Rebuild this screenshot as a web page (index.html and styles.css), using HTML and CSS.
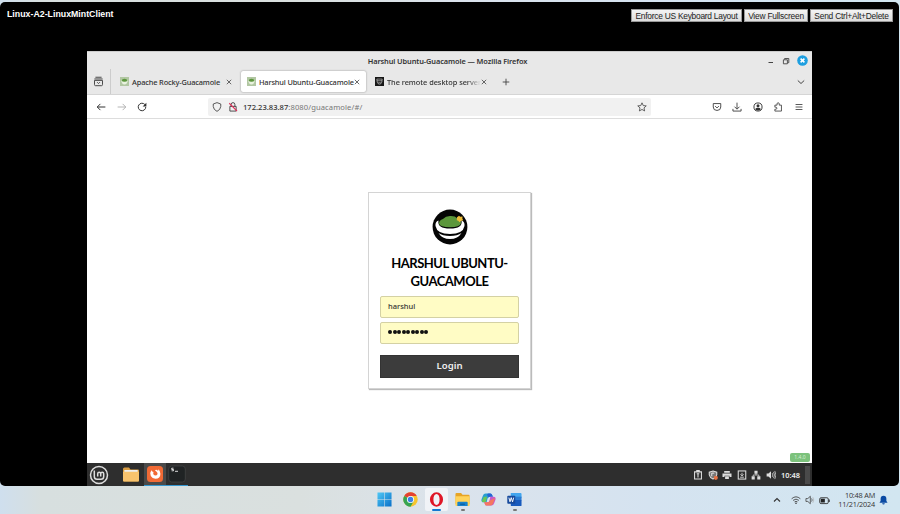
FILE: index.html
```html
<!DOCTYPE html>
<html lang="en">
<head>
<meta charset="utf-8">
<title>Linux-A2-LinuxMintClient</title>
<link rel="stylesheet" href="styles.css">
</head>
<body>
<main class="console">
  <header class="console-head">
    <strong class="vm-name">Linux-A2-LinuxMintClient</strong>
    <div class="console-actions">
      <button class="b1">Enforce US Keyboard Layout</button><button class="b2">View Fullscreen</button><button class="b3">Send Ctrl+Alt+Delete</button>
    </div>
  </header>
  <section class="desktop">
    <div class="titlebar">
      <span class="window-title">Harshul Ubuntu-Guacamole — Mozilla Firefox</span>
      <div class="window-buttons">
        <svg class="i8" viewBox="0 0 8 8"><path d="M1.5 5.5h4.500" stroke="#444" fill="none"/></svg>
        <svg class="i8" viewBox="0 0 8 8"><path d="M1.400 2.800h4v4h-4zM2.600 2.500v-1h4.200v4.200H5.800" stroke="#444" fill="none" stroke-width=".9"/></svg>
        <svg class="i11" viewBox="0 0 11 11"><circle cx="5.500" cy="5.500" r="5.300" fill="#1e9fe0"/><path d="m3.600 3.600 3.800 3.800m0-3.800L3.600 7.400" stroke="#fff" stroke-width="1.500"/></svg>
      </div>
    </div>
    <div class="tabs">
      <div class="tab-view"><svg class="i11" viewBox="0 0 16 16"><path d="M3.500 1.800h9M2 4.300h12M2.200 6.400h11.600v6.200q0 1.500-1.500 1.500H3.700q-1.500 0-1.500-1.500z" fill="none" stroke="#444" stroke-width="1.400"/><path d="m6 9 2 2 2-2" fill="none" stroke="#444" stroke-width="1.400"/></svg></div>
      <div class="tab">
        <svg class="fav" viewBox="0 0 10 10"><path fill="#b2c7a3" d="M0 0h10v10H0z"/><path d="M1.400 4.200h7.200Q8 8.200 5 8.200T1.400 4.200" fill="#e9f2df"/><ellipse cx="5" cy="3.600" rx="3" ry="1.700" fill="#5c963d"/></svg>
        <span class="tab-label">Apache Rocky-Guacamole</span>
        <svg class="close" viewBox="0 0 6 6"><path d="m.8.8 4.400 4.400m0-4.400L.8 5.200" stroke="#444" stroke-width=".8"/></svg>
      </div>
      <div class="tab active">
        <svg class="fav" viewBox="0 0 10 10"><path fill="#b2c7a3" d="M0 0h10v10H0z"/><path d="M1.400 4.200h7.200Q8 8.200 5 8.200T1.400 4.200" fill="#e9f2df"/><ellipse cx="5" cy="3.600" rx="3" ry="1.700" fill="#5c963d"/></svg>
        <span class="tab-label tight">Harshul Ubuntu-Guacamole</span>
        <svg class="close" viewBox="0 0 6 6"><path d="m.8.8 4.400 4.400m0-4.400L.8 5.200" stroke="#444" stroke-width=".8"/></svg>
      </div>
      <div class="tab third">
        <svg class="fav" viewBox="0 0 10 10"><path fill="#171717" d="M0 0h10v10H0z"/><path d="M2 2.300h6l-.4 3.200Q7 8 5 8T2.400 5.500zM2.200 4.200h5.600M3.500 6.400h3" fill="none" stroke="#ccc" stroke-width=".7"/></svg>
        <span class="tab-label fade">The remote desktop server</span>
        <svg class="close" viewBox="0 0 6 6"><path d="m.8.8 4.400 4.400m0-4.400L.8 5.200" stroke="#444" stroke-width=".8"/></svg>
      </div>
      <svg class="new-tab" viewBox="0 0 8 8"><path d="M4 .7v6.600M.7 4h6.600" stroke="#444" stroke-width=".9"/></svg>
      <svg class="tab-list" viewBox="0 0 8 8"><path d="m.8 2.500 3.200 3 3.200-3" fill="none" stroke="#444"/></svg>
    </div>
    <div class="navbar">
      <div class="history">
        <svg class="i10" viewBox="0 0 16 16"><path d="M15 8H2m5-5L2 8l5 5" fill="none" stroke="#333" stroke-width="1.600"/></svg>
        <svg class="i10" viewBox="0 0 16 16"><path d="M1 8h13M9 3l5 5-5 5" fill="none" stroke="#aaa" stroke-width="1.400"/></svg>
        <svg class="i10" viewBox="0 0 16 16"><path d="M12.500 4A6 6 0 1 0 14 8" fill="none" stroke="#333" stroke-width="1.600"/><path d="M15 1v6H9z" fill="#333"/></svg>
      </div>
      <div class="address">
        <svg class="i10" viewBox="0 0 16 16"><path d="m8 1 6 2.200v4Q13.500 12.500 8 15 2.500 12.500 2 7.200v-4z" fill="none" stroke="#444" stroke-width="1.400"/></svg>
        <svg class="i10 lock" viewBox="0 0 16 16"><path d="M3 7h10v7.500H3zM5 7V4q0-3 3-3t3 3v3" fill="none" stroke="#444" stroke-width="1.500"/><path d="m2 2 12.500 12.500" stroke="#e0305a" stroke-width="1.800"/></svg>
        <span class="url"><b>172.23.83.87</b>:8080/guacamole/#/</span>
        <svg class="i10 star" viewBox="0 0 16 16"><path d="m8 1.300 2 4.400 4.800.5-3.600 3.200 1 4.900L8 11.900l-4.200 2.400 1-4.900L1.200 6.200 6 5.700z" fill="none" stroke="#444" stroke-width="1.300"/></svg>
      </div>
      <div class="tools">
        <svg class="i10" viewBox="0 0 16 16"><path d="M2 2.500h12V8q0 5.500-6 5.500T2 8zM5 6.500l3 3 3-3" fill="none" stroke="#444" stroke-width="1.500"/></svg>
        <svg class="i10" viewBox="0 0 16 16"><path d="M8 1v10M4 7.500l4 4 4-4M1.500 11v3.500h13V11" fill="none" stroke="#444" stroke-width="1.500"/></svg>
        <svg class="i10" viewBox="0 0 16 16"><circle cx="8" cy="8" r="6.500" fill="none" stroke="#333" stroke-width="1.500"/><circle cx="8" cy="6" r="2.400" fill="#333"/><path d="M3.500 11.500Q4 9 6.500 9h3q2.500 0 3 2.500Q11 13.500 8 13.500t-4.500-2" fill="#333"/></svg>
        <svg class="i10" viewBox="0 0 16 16"><path d="M3 5h3.500V3q0-1.800 1.700-1.800T10 3v2h3.500v9.500H3v-3h1.500q1.700 0 1.700-1.600T4.500 8.300H3z" fill="none" stroke="#444" stroke-width="1.400"/></svg>
        <svg class="i10" viewBox="0 0 16 16"><path d="M2.500 4h11M2.500 8h11M2.500 12h11" stroke="#444" stroke-width="1.400"/></svg>
      </div>
    </div>
    <div class="page">
      <form class="login">
        <svg class="logo" viewBox="0 0 36 36"><circle cx="18" cy="18" r="17.400" fill="#050505"/><path d="M6.500 11.500Q3 12.500 3.500 17 5 25 18 25t14.500-8q.5-4.500-3-5.500 1.500 8-11.500 8T6.500 11.500" fill="#fff"/><path d="M6.500 24q4 3 11.500 3t11.500-3q-3.500 6-11.500 6T6.500 24" fill="#fff"/><path d="M7 14.500q0-3.300 4-4.500 2.500-2.700 7-2.900 5-.3 7.500 2.400 3.500 1.500 3.500 4.500-1 4.300-11 4.300T7 14.500" fill="#5c973b"/><path d="m25 8.300 2-1.500 1.300 1 2.200-.2-.1 2.200.8 1.500-2.200.7-1.500 1.200-1.200-1.400-1.500-.6z" fill="#edbd3a"/></svg>
        <h1>HARSHUL UBUNTU-<br>GUACAMOLE</h1>
        <div class="field">harshul</div>
        <div class="field password"><i></i><i></i><i></i><i></i><i></i><i></i><i></i><i></i><i></i></div>
        <button type="button" class="submit">Login</button>
      </form>
      <span class="version">1.4.0</span>
    </div>
    <div class="panel">
      <div class="menu"><svg viewBox="0 0 20 20"><circle cx="10" cy="10" r="8.500" fill="none" stroke="#ddd" stroke-width="1.500"/><path d="M5.300 5.500v6q0 2.800 2.700 2.800h4q2.700 0 2.700-2.800V8.800q0-1.500-1.500-1.500t-1.500 1.500v2.700-2.700q0-1.500-1.500-1.500T8.700 8.800v2.700" fill="none" stroke="#ddd" stroke-width="1.500"/></svg></div>
      <div class="app"><svg viewBox="0 0 18 18"><path d="M1 3q0-1.500 1.500-1.500H7l1.500 2h7.500q1 0 1 1V14q0 1.500-1 1.500H2Q1 15.500 1 14z" fill="#d99d43"/><path d="M2.300 4h13.400v3H2.300z" fill="#eee"/><path d="M1 5.700h16V14q0 1.500-1 1.500H2Q1 15.500 1 14z" fill="#f8c36d"/></svg></div>
      <div class="app open current"><svg viewBox="0 0 18 18"><rect x="1" y="1" width="16" height="16" rx="3.500" fill="#f26a35"/><path d="M5.500 5q-2.200 3-.7 6 1.500 2.700 4.600 2.700 5 0 5-5 0-2.700-2-4.500l-.3 1.800Q10 3.800 9 5.500q2 1 2.500 2.500.2 2.500-2.100 2.500-2 0-2.200-2.100l.3-1.300-1.600-.8z" fill="#fff"/></svg></div>
      <div class="app open"><svg viewBox="0 0 18 18"><rect x=".7" y="1" width="16.600" height="16" rx="3" fill="#202324" stroke="#464849" stroke-width=".7"/><path d="M5.500 3.200H3.700v1.300h1.800v1.300H3.600M7 6.300h3" fill="none" stroke="#eee" stroke-width=".9"/></svg></div>
      <div class="tray">
        <svg viewBox="0 0 16 16"><path d="M2.500 3h11v11.500h-11zM6 1h4v2H6zM6 6h4M8 6v6" fill="none" stroke="#ddd" stroke-width="1.700"/></svg>
        <svg viewBox="0 0 16 16"><path d="m8 1.500 6 2V8q-1 4.500-6 6.500Q3 12.500 2 8V3.500z" fill="#777" stroke="#ddd" stroke-width="1.700"/><path d="M6 5h4M6 5v5" stroke="#eee" stroke-width="1.500"/><circle cx="12.500" cy="12.500" r="3.300" fill="#e57245"/></svg>
        <svg viewBox="0 0 16 16"><path d="M3.500 1.500h9v3h-9zM.8 5.500h14.400V11H12V9H4v2H.8zM5 10h6v4.500H5z" fill="#ddd"/></svg>
        <svg viewBox="0 0 16 16"><rect x="2" y="1.500" width="12" height="13" fill="none" stroke="#ddd" stroke-width="1.700"/><path d="M8 4.500v4M5.500 7 8 9.500 10.500 7M5 11.500h6" fill="none" stroke="#ddd" stroke-width="1.400"/></svg>
        <svg viewBox="0 0 16 16"><path d="M5.500 1h5v5h-5zM1 10h5v5H1zM10 10h5v5h-5z" fill="#ddd"/><path d="M8 5v3M3.500 10V8h9v2" fill="none" stroke="#ddd" stroke-width="1.300"/></svg>
        <svg viewBox="0 0 16 16"><path d="M1 5.500h3L8 2v12l-4-3.500H1z" fill="#ddd"/><path d="M10 5q2 3 0 6m2-8q3.200 5 0 10m2-11.500q4 6.500 0 13" fill="none" stroke="#ccc" stroke-width="1.300"/></svg>
      </div>
      <span class="clock">10:48</span>
      <div class="show-desktop"></div>
    </div>
  </section>
</main>
<footer class="taskbar">
  <nav class="dock">
    <div class="pin"><svg viewBox="0 0 16 16"><defs><linearGradient id="win" x2="1" y2="1"><stop stop-color="#50c8f5"/><stop offset="1" stop-color="#0870c9"/></linearGradient></defs><path fill="url(#win)" d="M.5.5h7.200v7.200H.5zM8.300.5h7.200v7.200H8.300zM.5 8.300h7.200v7.200H.5zM8.300 8.300h7.200v7.200H8.300z"/></svg></div>
    <div class="pin"><svg viewBox="0 0 16 16"><circle cx="8" cy="8" r="7.700" fill="#f6c52e"/><path d="M8 8 1.330 4.150A7.700 7.700 0 0 1 14.670 4.150H8z" fill="#e44132"/><path d="M8 8 1.330 4.150A7.700 7.700 0 0 0 8 15.700L11.400 9.800z" fill="#36a452"/><circle cx="8" cy="8" r="3.800" fill="#fff"/><circle cx="8" cy="8" r="2.900" fill="#3c80e8"/></svg></div>
    <div class="pin selected"><svg viewBox="0 0 16 16"><path fill-rule="evenodd" d="M8 .3a7 7.700 0 1 0 0 15.400A7 7.700 0 0 0 8 .3M8 2.200c2 0 3.300 2.500 3.300 5.800S10 13.800 8 13.800 4.700 11.300 4.700 8 6 2.200 8 2.200" fill="#df1727"/></svg><i></i></div>
    <div class="pin running"><svg viewBox="0 0 16 16"><path d="M.5 2q0-1 1-1h5L8 3h6.500q1 0 1 1v9H.5z" fill="#e6a426"/><path d="M.5 4.500h15V14q0 1-1 1h-13q-1 0-1-1z" fill="#ffd35a"/><path d="M3.500 10.500h9q1 0 1 1V15h-11v-3.500q0-1 1-1" fill="#1681cc"/><path d="M5.500 13h5" stroke="#0b538f"/></svg><i></i></div>
    <div class="pin"><svg viewBox="0 0 16 16"><path d="M5 1.500h5q1.500 0 2 2L13 5H9.500q-2 0-2.500 2l-1 4H2.500q-2.500 0-2-3l1.500-4q.7-2.500 3-2.500" fill="#289ed1"/><path d="M1 9.500 3 5h3.500L5 11H3Q1 11 1 9.500" fill="#6cc656"/><path d="M10 1.500q1.500 0 2 2L12.500 5H9.800Q8.500 4.800 8 6L6.500 3Q7 1.500 8 1.500" fill="#2861d6"/><path d="M11 14.500H6q-1.500 0-2-2L3.500 11h3q2 0 2.500-2l1-4h3.500q2.500 0 2 3L14 12q-.7 2.500-3 2.500" fill="#ca59c5"/><path d="M15 6.500 13 12q-1 2.500-3 2.500H6q-1.500 0-2-2L3.500 11H7q2 0 2.500-2z" fill="#f4785f"/></svg></div>
    <div class="pin running"><svg viewBox="0 0 16 16"><path d="M4 1h10.500q1 0 1 1v4H4z" fill="#41a5ee"/><path d="M4 5h11.500v4H4z" fill="#2b7cd3"/><path d="M4 8.500h11.500V14q0 1-1 1H5q-1 0-1-1z" fill="#185abd"/><rect x=".3" y="4" width="8.500" height="8.500" rx=".8" fill="#174a9c"/><path d="m2 6 1.200 4.500L4.500 6l1.400 4.500L7.100 6" fill="none" stroke="#fff"/></svg><i></i></div>
  </nav>
  <div class="system">
    <svg class="chevron" viewBox="0 0 8 8"><path d="m1 5.500 3-3 3 3" fill="none" stroke="#333" stroke-width="1.100"/></svg>
    <svg class="wifi" viewBox="0 0 16 16"><path d="M1 6Q8-.2 15 6M3.300 8.600q4.700-4 9.400 0M5.700 11Q8 9.300 10.300 11" fill="none" stroke="#444" stroke-width="1.400"/><circle cx="8" cy="13.200" r="1.300" fill="#333"/></svg>
    <svg class="sound" viewBox="0 0 16 16"><path d="M1.500 5.700h3L8.500 2v12l-4-3.700h-3z" fill="none" stroke="#444" stroke-width="1.300"/><path d="M10.500 5.500q2 2.500 0 5" fill="none" stroke="#444" stroke-width="1.200"/><path d="M12.500 3.500q3 4.500 0 9" fill="none" stroke="#aaa"/></svg>
    <svg class="battery" viewBox="0 0 16 16"><rect x="1" y="4" width="12.500" height="8.500" rx="2" fill="none" stroke="#333" stroke-width="1.300"/><path d="M2.500 5.500h6v5.500h-6zM14 6.500h1.500v3.500H14z" fill="#222"/></svg>
    <div class="datetime"><span>10:48 AM</span><span>11/21/2024</span></div>
    <svg class="bell" viewBox="0 0 10 10"><path d="M5 .2q3.200 0 3.200 3.300V6l1.300 2H.5l1.300-2V3.500Q1.800.2 5 .2M3.500 8.500h3Q6.300 9.900 5 9.900T3.500 8.500" fill="#0a4aa3"/></svg>
  </div>
</footer>
</body>
</html>
```
FILE: styles.css
```css
* { box-sizing: border-box; }
body {
  margin: 0;
  width: 900px;
  height: 514px;
  padding-top: 2px;
  overflow: hidden;
  background: linear-gradient(90deg, #cfdfee 0, #d7dfdf 40px, #dae0df 300px, #dbe3ec 450px, #d5e3f0 650px, #d2e6f1 900px);
  font-family: "Noto Sans", sans-serif;
  color: #333;
}
svg { display: block; flex: none; }
button { margin: 0; }
.console {
  width: 899px;
  height: 484px;
  background: #000;
  border-radius: 5px;
}
.console-head {
  display: flex;
  justify-content: space-between;
  height: 49px;
  padding: 7px 6px 0 7px;
}
.vm-name {
  font: bold 8.8px/11px "Liberation Sans", sans-serif;
  color: #fff;
  white-space: nowrap;
}
.console-actions { display: flex; gap: 2px; }
.console-actions button {
  height: 13px;
  padding: 0;
  border: 1px solid #999;
  background: linear-gradient(#f4f4f4, #ddd);
  color: #222;
  font: 8.4px/10px "Liberation Sans", sans-serif;
  letter-spacing: -.25px;
  white-space: nowrap;
}
.console-actions .b1 { width: 111px; }
.console-actions .b2 { width: 64px; letter-spacing: -.22px; }
.console-actions .b3 { width: 83px; letter-spacing: -.22px; }

.desktop {
  width: 725px;
  height: 435px;
  margin-left: 87px;
  display: flex;
  flex-direction: column;
  background: #fff;
}
.titlebar {
  display: grid;
  grid-template-columns: 1fr auto 1fr;
  height: 18px;
  align-items: center;
  padding-right: 4px;
  border-top: 1px solid #ccc;
  background: #e8e8e8;
}
.window-title {
  grid-column: 2;
  font-size: 7.4px;
  font-weight: 600;
  letter-spacing: -.1px;
  white-space: nowrap;
  color: #333;
}
.window-buttons { display: flex; justify-content: flex-end; align-items: center; gap: 7px; }
.i8 { width: 8px; height: 8px; }
.i10 { width: 10px; height: 10px; }
.i11 { width: 11px; height: 11px; }
.tabs {
  display: flex;
  align-items: center;
  height: 26px;
  padding-right: 7px;
  background: #e8e8e8;
  border-bottom: 1px solid #d5d5d5;
}
.tab-view {
  width: 24px;
  height: 25px;
  display: flex;
  align-items: center;
  justify-content: center;
  border-right: 1px solid #ccc;
}
.tab {
  display: flex;
  align-items: center;
  width: 125px;
  height: 21px;
  margin-left: 3px;
  padding-left: 6px;
  border-radius: 2px;
}
.active { background: #fff; box-shadow: 0 0 2px #888; margin-left: 2px; }
.third { padding-left: 5px; width: 121px; margin-left: 4px; }
.fav { width: 9px; height: 9px; margin-right: 3px; }
.tab-label {
  width: 94px;
  font-size: 7.4px;
  font-weight: 500;
  line-height: 10px;
  letter-spacing: -.14px;
  white-space: nowrap;
}
.active .close { margin-left: 1px; }
.tight { letter-spacing: -.16px; }
.fade { mask-image: linear-gradient(90deg, #000 80px, transparent 94px); letter-spacing: -.05px; }
.close { width: 6px; height: 6px; }
.new-tab { width: 8px; height: 8px; margin-left: 11px; }
.tab-list { width: 8px; height: 8px; margin-left: auto; }
.navbar {
  display: flex;
  align-items: center;
  height: 24px;
  border-bottom: 1px solid #ddd;
}
.history { display: flex; gap: 10.5px; width: 121px; padding-left: 9px; }
.address {
  display: flex;
  align-items: center;
  width: 443px;
  height: 18px;
  padding: 0 4px;
  border-radius: 2px;
  background: #f1f1f1;
}
.lock { margin: 0 5px 0 6px; }
.url { font-size: 7.6px; line-height: 10px; letter-spacing: .1px; color: #777; white-space: nowrap; }
.url b { font-weight: 500; letter-spacing: 0; color: #333; }
.star { margin-left: auto; }
.tools { display: flex; gap: 10.5px; margin-left: auto; padding-right: 8.5px; }
.page {
  position: relative;
  flex: 1;
  padding-top: 73px;
}
.login {
  width: 163px;
  height: 197px;
  margin-left: 281px;
  padding: 16px 11px 0;
  border: 1px solid #d4d4d4;
  box-shadow: 1px 1px 1px #bbb;
}
.logo { width: 36px; height: 36px; margin: 0 auto; }
h1 {
  margin: 9px 0 6px;
  font: 700 13px/18px Lato, sans-serif;
  letter-spacing: -.5px;
  text-align: center;
  color: #000;
  white-space: nowrap;
}
.field {
  height: 22px;
  margin-bottom: 4px;
  padding-left: 7px;
  border: 1px solid #d4d1a4;
  border-radius: 2px;
  background: #fffcc5;
  font-size: 7.5px;
  font-weight: 500;
  line-height: 19px;
}
.password { display: flex; align-items: center; gap: .5px; padding-bottom: 2px; }
.password i { width: 4px; height: 4px; border-radius: 50%; background: #111; }
.submit {
  display: block;
  width: 100%;
  height: 23px;
  margin-top: 11px;
  padding: 0 0 2px;
  border: 1px solid #333;
  background: #3c3c3c;
  color: #eee;
  font: 600 9.6px/18px "Noto Sans", sans-serif;
}
.version {
  position: absolute;
  right: 2px;
  bottom: 1px;
  width: 20px;
  height: 9px;
  border-radius: 2px;
  background: #7cc27c;
  color: #d5efd4;
  font-size: 5px;
  line-height: 9px;
  text-align: center;
}
.panel {
  display: flex;
  align-items: center;
  height: 23px;
  background: #2e2e2e;
}
.menu { width: 29px; padding-left: 2px; }
.menu svg { width: 20px; height: 20px; }
.app {
  display: flex;
  justify-content: center;
  align-items: center;
  width: 22px;
  height: 23px;
}
.app:nth-child(2) { width: 28px; padding-left: 2px; }
.app svg { width: 18px; height: 18px; }
.open { border-bottom: 1px solid #3497d1; }
.current { background: #4a4a4a; }
.tray { display: flex; gap: 4.6px; margin-left: auto; }
.tray svg { width: 10px; height: 10px; }
.clock { width: 20px; margin-left: 5px; font-size: 7.4px; font-weight: 600; color: #eee; white-space: nowrap; }
.show-desktop { width: 5px; height: 18px; margin: 0 2px 0 4px; background: #4a4a4a; }

.taskbar {
  display: flex;
  justify-content: space-between;
  height: 28px;
}
.dock { display: flex; gap: 3px; margin-left: 373px; padding-top: 2px; }
.pin {
  display: flex;
  flex-direction: column;
  align-items: center;
  width: 23px;
  height: 23px;
  padding-top: 4px;
  border-radius: 2px;
}
.pin svg { width: 15px; height: 15px; }
.pin i { width: 4px; height: 2px; margin-top: 2px; border-radius: 1px; background: #777; }
.selected { background: #f0f3f7; }
.selected i { width: 9px; background: #1278d2; }
.system { display: flex; align-items: center; padding-right: 12px; }
.chevron { width: 8px; height: 8px; margin-right: 10px; }
.wifi { width: 10px; height: 10px; margin-right: 4px; }
.sound { width: 10px; height: 10px; margin-right: 4px; }
.battery { width: 11px; height: 11px; }
.datetime {
  display: flex;
  flex-direction: column;
  width: 45px;
  align-items: flex-end;
  font: 7.3px/9px "Open Sans", sans-serif;
  letter-spacing: -.2px;
  white-space: nowrap;
}
.bell { width: 9px; height: 10px; margin-left: 4px; }
```
